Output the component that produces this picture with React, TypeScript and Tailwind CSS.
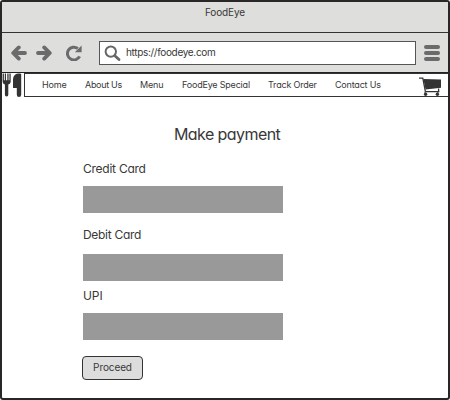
const navLinks = [
  { label: "Home", style: "w-[43px] tracking-[-0.15px]" },
  { label: "About Us", style: "w-[55px] tracking-[-0.3px]" },
  { label: "Menu", style: "w-[42px] tracking-[-0.15px]" },
  { label: "FoodEye Special", style: "w-[86px] tracking-[-0.2px]" },
  { label: "Track Order", style: "w-[67px] tracking-[-0.2px]" },
  { label: "Contact Us", style: "w-[60px] tracking-[-0.2px]" },
];

function BackIcon() {
  return (
    <svg className="h-4 w-4" viewBox="0 0 16 16" fill="none" stroke="#6b6b6b" strokeWidth="3.8" strokeLinecap="round" strokeLinejoin="round">
      <path d="M7.8 2.4 2.2 8l5.6 5.6M3 8h11" />
    </svg>
  );
}

function ForwardIcon() {
  return (
    <svg className="ml-[9px] h-4 w-4" viewBox="0 0 16 16" fill="none" stroke="#6b6b6b" strokeWidth="3.8" strokeLinecap="round" strokeLinejoin="round">
      <path d="M8.2 2.4 13.8 8l-5.6 5.6M13 8H2" />
    </svg>
  );
}

function ReloadIcon() {
  return (
    <svg className="ml-[13px] h-4 w-[17px]" viewBox="0 0 17 16">
      <path d="M14.6 11.4A6.4 6.4 0 1 1 12.8 3.5" fill="none" stroke="#6b6b6b" strokeWidth="3" />
      <path d="M16.6 0.4V7.2H9.8Z" fill="#6b6b6b" />
    </svg>
  );
}

function SearchIcon() {
  return (
    <svg className="mt-px h-[17px] w-[17px]" viewBox="0 0 17 17" fill="none" stroke="#666" strokeLinecap="round">
      <circle cx="6.8" cy="6.6" r="5.2" strokeWidth="2" />
      <path d="m11.4 11.2 3.6 3.4" strokeWidth="2.8" />
    </svg>
  );
}

function CutleryIcon() {
  return (
    <svg className="h-6 w-[22px] shrink-0" viewBox="0 0 22 24" fill="#333">
      <path d="M.6.5v8C.6 10.2 1.6 11 2.9 11.4v10.4a1.7 1.7 0 0 0 3.4 0V11.4C7.7 11 8.7 10.2 8.7 8.5v-8H7.4v6.7H6.6V.5H5.3v6.7H4V.5H2.8v6.7H1.9V.5Z" />
      <path d="M19.2 1.3v20.4a2.2 2.2 0 0 1-4.4 0V15H11V7.2C11 3.3 13 .8 16.1.6h2q1.1 0 1.1.7Z" />
    </svg>
  );
}

function CartIcon() {
  return (
    <svg className="h-[19px] w-[23px]" viewBox="0 0 23 19">
      <path d="M4.4 2 22 2.6v8.2L6.6 12.6Z" fill="#333" />
      <path d="M0 1.1h3.8l2.6 13.6h14M19.6 11.5v3" fill="none" stroke="#333" strokeWidth="1.3" />
      <path d="M6 15.2v1M18.8 15.2v1" stroke="#333" strokeWidth="1.2" />
      <circle cx="6.6" cy="17.2" r="1.7" fill="#333" />
      <circle cx="18.4" cy="17.2" r="1.7" fill="#333" />
    </svg>
  );
}

export default function App() {
  return (
    <div className="flex h-[400px] w-[450px] flex-col overflow-hidden rounded-[3px] border-2 border-[#292627] bg-white font-['Inter',sans-serif] text-[#383838] [font-feature-settings:'cv11'_1]">
      <header className="flex h-[31px] shrink-0 justify-center border-b border-[#333] bg-[#dededc] pt-[2px] text-[10px] leading-[16px]">
        <span className="tracking-[-0.1px]">FoodEye</span>
      </header>
      <div className="flex h-10 shrink-0 items-center border-b-[1.5px] border-[#222] bg-[#dededc] pl-[9px]">
        <BackIcon />
        <ForwardIcon />
        <ReloadIcon />
        <div className="ml-[17px] flex h-6 w-[317px] items-center border border-[#555] bg-white pl-[4px]">
          <SearchIcon />
          <span className="-mt-px ml-[5px] text-[10px] leading-4 tracking-[-0.32px]">https://foodeye.com</span>
        </div>
        <div className="ml-2 flex w-4 flex-col gap-[2px]">
          <i className="h-1 rounded-full bg-[#6b6b6b]" />
          <i className="h-1 rounded-full bg-[#6b6b6b]" />
          <i className="h-1 rounded-full bg-[#6b6b6b]" />
        </div>
      </div>
      <div className="flex h-6 shrink-0">
        <CutleryIcon />
        <nav className="flex grow items-center border border-r-0 border-[#333] pl-[17px] text-[9px]">
          {navLinks.map((link) => (
            <a key={link.label} className={`shrink-0 whitespace-nowrap ${link.style}`}>{link.label}</a>
          ))}
          <div className="ml-[24px] mt-[2px] shrink-0">
            <CartIcon />
          </div>
        </nav>
      </div>
      <main className="flex flex-col items-start pl-[81px] text-[12px] leading-4">
        <h1 className="ml-[91px] mt-[27px] text-[16px] leading-5 tracking-[-0.58px]">Make payment</h1>
        <label className="mt-[17px] tracking-[-0.25px]">Credit Card</label>
        <div className="mt-[9px] h-[27px] w-[200px] bg-[#999]" />
        <label className="mt-[14px] tracking-[-0.3px]">Debit Card</label>
        <div className="mt-[11px] h-[27px] w-[200px] bg-[#999]" />
        <label className="mt-[7px] tracking-[-0.1px]">UPI</label>
        <div className="mt-[9px] h-[27px] w-[200px] bg-[#999]" />
        <button className="-ml-px mt-4 h-6 w-[61px] rounded-[4px] border border-[#333] bg-[#dddddd] pb-[3px] text-[10px] leading-none tracking-[-0.1px]">Proceed</button>
      </main>
    </div>
  );
}
